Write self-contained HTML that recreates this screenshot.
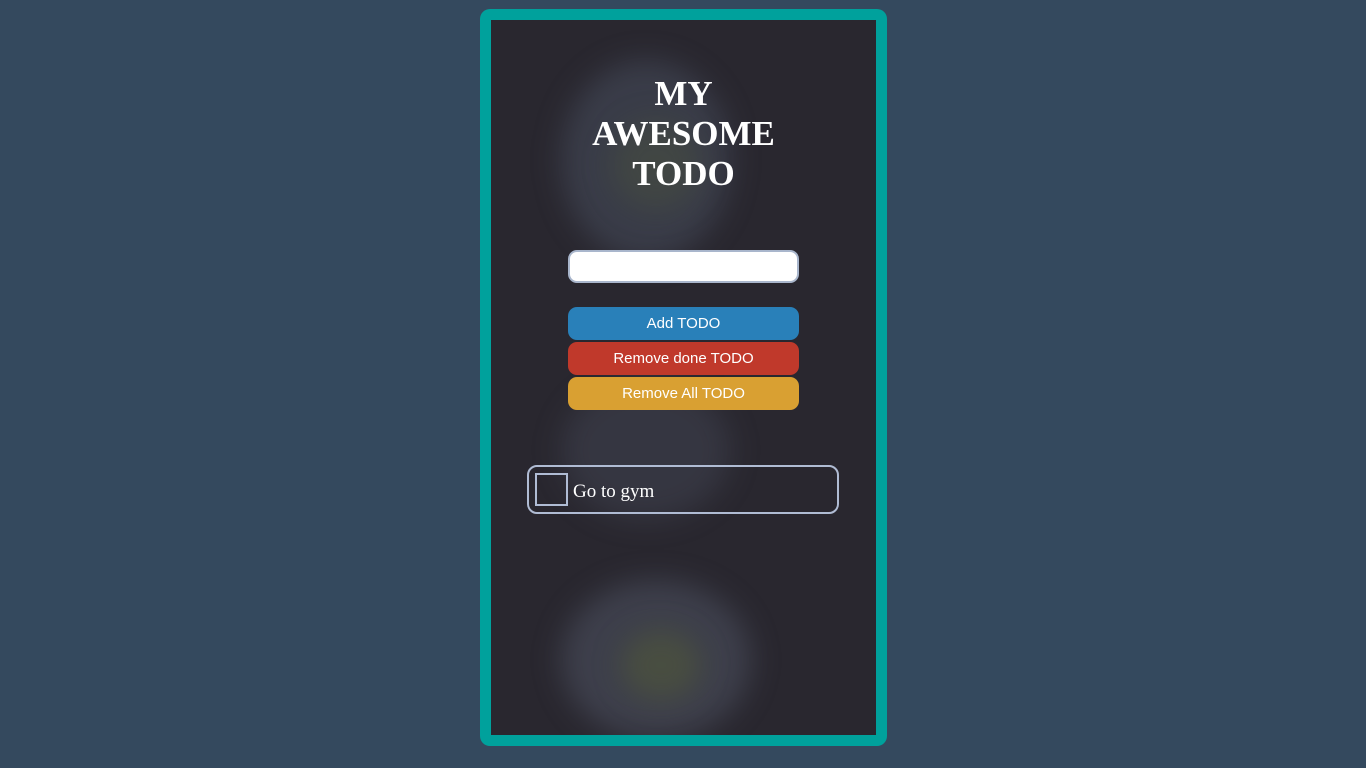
<!DOCTYPE html>
<html><head><meta charset="utf-8"><style>
html,body{margin:0;padding:0;width:1366px;height:768px;background:#34495e;overflow:hidden}
.card{position:absolute;left:480px;top:9px;width:385px;height:715px;border:11px solid #00a19c;border-radius:10px;background:#29272f;overflow:hidden}
.blob{position:absolute;border-radius:50%;filter:blur(14px)}
h1{position:absolute;left:0;width:385px;top:54px;margin:0;text-align:center;font:bold 35px/40px "Liberation Serif",serif;color:#fff;padding:0 90px;box-sizing:border-box}
.in{position:absolute;left:77px;top:230px;width:231px;height:33px;box-sizing:border-box;background:#fff;border:2px solid #a9b6cc;border-radius:9px}
.b{position:absolute;left:77px;width:231px;height:33px;border-radius:9px;color:#fff;font:15px/34px "Liberation Sans",sans-serif;text-align:center}
.item{position:absolute;left:36px;top:445px;width:312px;height:49px;box-sizing:border-box;border:2px solid #b0bcd4;border-radius:10px}
.cb{position:absolute;left:6px;top:6px;width:33px;height:33px;box-sizing:border-box;border:2px solid #b0bcd4}
.t{position:absolute;left:44px;top:14px;font:19px "Liberation Serif",serif;color:#fff}
</style></head><body>
<div class="card">
<div class="blob" style="left:70px;top:40px;width:170px;height:200px;background:rgba(90,100,120,.35)"></div>
<div class="blob" style="left:120px;top:100px;width:90px;height:90px;background:rgba(80,90,60,.35)"></div>
<div class="blob" style="left:70px;top:360px;width:170px;height:140px;background:rgba(90,100,120,.25)"></div>
<div class="blob" style="left:70px;top:560px;width:190px;height:160px;background:rgba(100,110,130,.35)"></div>
<div class="blob" style="left:130px;top:610px;width:80px;height:70px;background:rgba(90,100,50,.4)"></div>
<h1>MY AWESOME TODO</h1>
<div class="in"></div>
<div class="b" style="top:287px;background:#2980b9">Add TODO</div>
<div class="b" style="top:322px;background:#c0392b">Remove done TODO</div>
<div class="b" style="top:357px;background:#d9a032">Remove All TODO</div>
<div class="item"><div class="cb"></div><div class="t">Go to gym</div></div>
</div>
</body></html>
